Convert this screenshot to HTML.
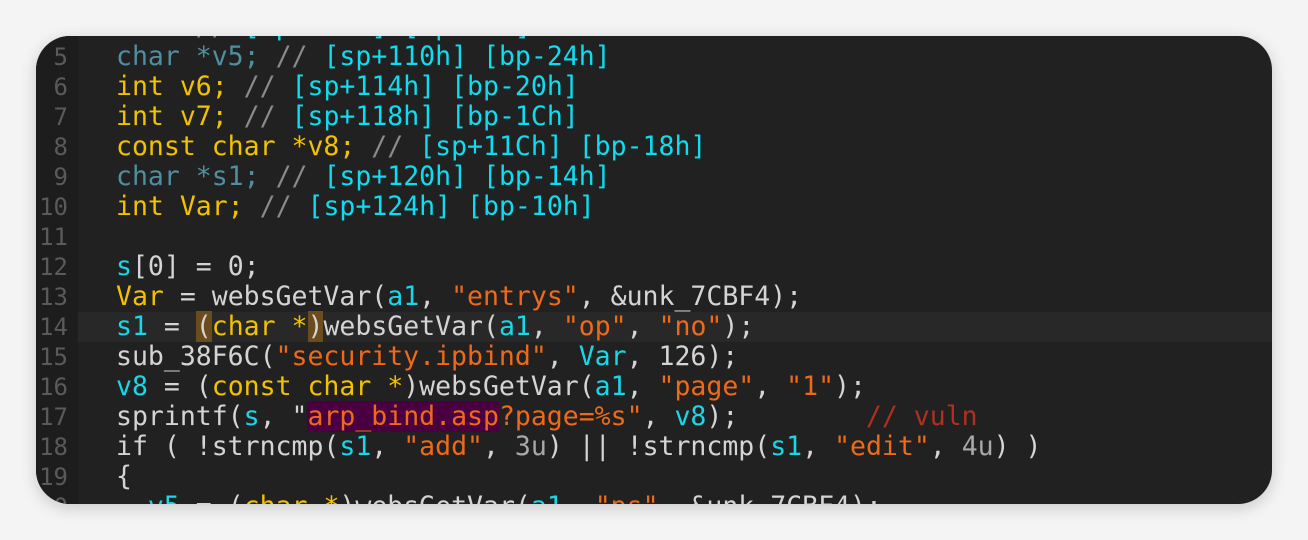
<!DOCTYPE html>
<html><head><style>
body{margin:0;width:1308px;height:540px;background:#f4f4f4;overflow:hidden;position:relative}
.p{position:absolute;left:36px;top:36px;width:1236px;height:468px;background:#212121;border-radius:34px;overflow:hidden;box-shadow:0 4px 16px rgba(0,0,0,.18)}
.g{position:absolute;left:0;top:0;width:42px;height:100%;background:#1d1d1d}
.hl{position:absolute;left:42px;top:276px;width:1200px;height:30px;background:#282828}
.c{position:absolute;left:0;top:-24px;font-family:"DejaVu Sans Mono","Liberation Mono",monospace;font-size:26.5px;line-height:30px;color:#d4d4d4}
.l{display:block;height:30px;white-space:pre}
.n{display:inline-block;width:32px;text-align:right;color:#5a5a5a;margin-right:48px;font-size:24px}
.t{color:#4f8fa0}.k{color:#f2c200}.m{color:#8a8a8a}.b{color:#10dcf0}.s{color:#ee6a1a}.v{color:#18d8e8}.r{color:#b03020}.u{color:#a8a8a8}
.pu{background:#4a0040}.br{background:#6b4c1c}
</style></head><body>
<div class="p"><div class="g"></div><div class="hl"></div>
<div class="c"><span class="l"><span class="n"> 4</span><span class="t">char</span> <span class="m">//</span> <span class="b">[sp+10Ch] [bp-28h]</span></span><span class="l"><span class="n"> 5</span><span class="t">char *v5;</span> <span class="m">//</span> <span class="b">[sp+110h] [bp-24h]</span></span><span class="l"><span class="n"> 6</span><span class="k">int v6;</span> <span class="m">//</span> <span class="b">[sp+114h] [bp-20h]</span></span><span class="l"><span class="n"> 7</span><span class="k">int v7;</span> <span class="m">//</span> <span class="b">[sp+118h] [bp-1Ch]</span></span><span class="l"><span class="n"> 8</span><span class="k">const char *v8;</span> <span class="m">//</span> <span class="b">[sp+11Ch] [bp-18h]</span></span><span class="l"><span class="n"> 9</span><span class="t">char *s1;</span> <span class="m">//</span> <span class="b">[sp+120h] [bp-14h]</span></span><span class="l"><span class="n">10</span><span class="k">int Var;</span> <span class="m">//</span> <span class="b">[sp+124h] [bp-10h]</span></span><span class="l"><span class="n">11</span></span><span class="l"><span class="n">12</span><span class="v">s</span>[0] = 0;</span><span class="l"><span class="n">13</span><span class="k">Var</span> = websGetVar(<span class="v">a1</span>, <span class="s">"entrys"</span>, &amp;unk_7CBF4);</span><span class="l"><span class="n">14</span><span class="v">s1</span> = <span class="br">(</span><span class="k">char *</span><span class="br">)</span>websGetVar(<span class="v">a1</span>, <span class="s">"op"</span>, <span class="s">"no"</span>);</span><span class="l"><span class="n">15</span>sub_38F6C(<span class="s">"security.ipbind"</span>, <span class="v">Var</span>, 126);</span><span class="l"><span class="n">16</span><span class="v">v8</span> = (<span class="k">const char *</span>)websGetVar(<span class="v">a1</span>, <span class="s">"page"</span>, <span class="s">"1"</span>);</span><span class="l"><span class="n">17</span>sprintf(<span class="v">s</span>, "<span class="s pu">arp_bind.asp</span><span class="s">?page=%s"</span>, <span class="v">v8</span>);        <span class="r">// vuln</span></span><span class="l"><span class="n">18</span>if ( !strncmp(<span class="v">s1</span>, <span class="s">"add"</span>, <span class="u">3u</span>) || !strncmp(<span class="v">s1</span>, <span class="s">"edit"</span>, <span class="u">4u</span>) )</span><span class="l"><span class="n">19</span>{</span><span class="l"><span class="n">20</span>  <span class="v">v5</span> = (<span class="k">char *</span>)websGetVar(<span class="v">a1</span>, <span class="s">"ps"</span>, &amp;unk_7CBF4);</span></div></div>
</body></html>
